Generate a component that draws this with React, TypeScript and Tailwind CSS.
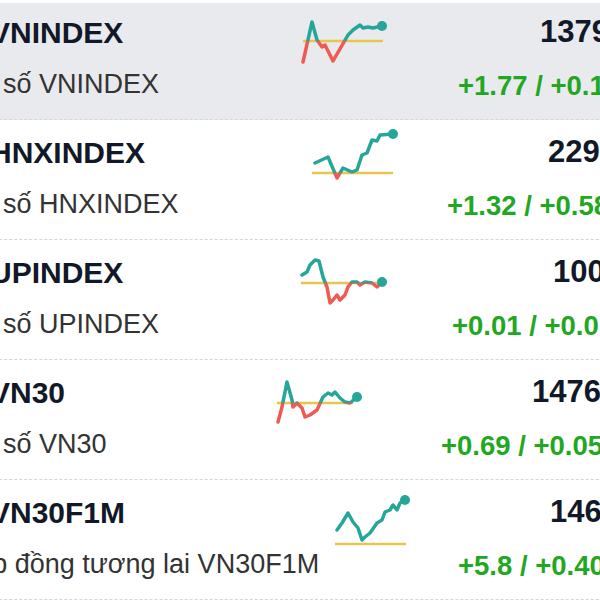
type Pt = [number, number];

interface Row {
    code: string;
    name: string;
    price: string;
    change: string;
    leftW: string;
    pricePad: string;
    changePad: string;
    base: number;
    baseX: [number, number];
    points: Pt[];
    active?: boolean;
}

const ROWS: Row[] = [
    {
        code: 'VNINDEX',
        name: 'Chỉ số VNINDEX',
        price: '1379.61',
        change: '+1.77 / +0.13%',
        leftW: 'w-[341px]',
        pricePad: 'pl-[123px]',
        changePad: 'pl-[41px]',
        base: 41,
        baseX: [6, 86],
        points: [[6, 62], [15, 22], [20, 40], [25, 47], [28, 45], [36, 61], [51, 35], [56, 30], [63, 25], [66, 28], [71, 27], [76, 28], [85, 26]],
        active: true,
    },
    {
        code: 'HNXINDEX',
        name: 'Chỉ số HNXINDEX',
        price: '229.84',
        change: '+1.32 / +0.58%',
        leftW: 'w-[351px]',
        pricePad: 'pl-[121px]',
        changePad: 'pl-[20px]',
        base: 53,
        baseX: [5, 86],
        points: [[8, 43], [21, 37], [30, 58], [36, 48], [45, 52], [50, 50], [55, 35], [60, 33], [65, 20], [70, 21], [73, 15], [86, 14]],
    },
    {
        code: 'UPINDEX',
        name: 'Chỉ số UPINDEX',
        price: '100.12',
        change: '+0.01 / +0.01%',
        leftW: 'w-[340px]',
        pricePad: 'pl-[137px]',
        changePad: 'pl-[36px]',
        base: 43,
        baseX: [5, 89],
        points: [[6, 35], [11, 32], [14, 25], [19, 20], [23, 21], [27, 37], [31, 47], [34, 63], [37, 60], [41, 55], [44, 60], [49, 55], [52, 47], [56, 42], [61, 42], [64, 45], [69, 42], [76, 43], [81, 47], [86, 42]],
    },
    {
        code: 'VN30',
        name: 'Chỉ số VN30',
        price: '1476.95',
        change: '+0.69 / +0.05%',
        leftW: 'w-[316px]',
        pricePad: 'pl-[140px]',
        changePad: 'pl-[49px]',
        base: 43,
        baseX: [5, 81],
        points: [[6, 62], [10, 47], [15, 22], [20, 40], [21, 47], [25, 43], [30, 48], [33, 57], [38, 55], [45, 50], [51, 37], [56, 33], [60, 35], [63, 32], [68, 38], [73, 42], [78, 43], [85, 37]],
    },
    {
        code: 'VN30F1M',
        name: 'Hợp đồng tương lai VN30F1M',
        price: '1466.8',
        change: '+5.8 / +0.40%',
        leftW: 'w-[374px]',
        pricePad: 'pl-[100px]',
        changePad: 'pl-[8px]',
        base: 64,
        baseX: [5, 76],
        points: [[7, 50], [12, 43], [18, 33], [23, 42], [28, 48], [32, 60], [35, 57], [40, 53], [47, 43], [52, 40], [55, 32], [60, 30], [63, 25], [67, 30], [70, 23], [75, 20]],
    },
];

function Spark({ row, id }: { row: Row; id: number }) {
    const pts = row.points.map((p) => p.join(',')).join(' ');
    const last = row.points[row.points.length - 1];
    return (
        <svg width="120" height="120" viewBox="0 0 120 120" className="shrink-0">
            <defs>
                <clipPath id={`up-${id}`}>
                    <rect x="0" y="0" width="120" height={row.base} />
                </clipPath>
                <clipPath id={`dn-${id}`}>
                    <rect x="0" y={row.base} width="120" height={120 - row.base} />
                </clipPath>
            </defs>
            <line x1={row.baseX[0]} y1={row.base} x2={row.baseX[1]} y2={row.base} stroke="#e8c64c" strokeWidth="2.5" />
            <polyline points={pts} fill="none" stroke="#ef5a52" strokeWidth="3.5" strokeLinejoin="round" strokeLinecap="round" clipPath={`url(#dn-${id})`} />
            <polyline points={pts} fill="none" stroke="#26a69a" strokeWidth="3.5" strokeLinejoin="round" strokeLinecap="round" clipPath={`url(#up-${id})`} />
            <circle cx={last[0]} cy={last[1]} r="5" fill="#26a69a" />
        </svg>
    );
}

export default function App() {
    return (
        <div className="w-[600px] h-[600px] overflow-hidden bg-white font-['Liberation_Sans',Arial,sans-serif]">
            <div className="-ml-[46px] w-[720px]">
                {ROWS.map((row, i) => (
                    <div
                        key={row.code}
                        className={`flex h-[120px] border-b border-dashed border-[#d6d6d6] ${
                            row.active ? 'bg-[#e9eaed] shadow-[inset_0_3px_0_#fff]' : 'bg-white'
                        }`}
                    >
                        {/* Name */}
                        <div className={`${row.leftW} ml-[2px] shrink-0 whitespace-nowrap pt-[15px]`}>
                            <div className="pl-[34px] text-[30px] leading-[36px] font-bold text-[#111827]">{row.code}</div>
                            <div className="-ml-[1px] mt-[17px] text-[27px] leading-[32px] text-[#333333]">{row.name}</div>
                        </div>

                        <Spark row={row} id={i} />

                        {/* Price */}
                        <div className="flex-1 whitespace-nowrap pt-[14px]">
                            <div className={`${row.pricePad} text-[31px] leading-[36px] font-bold text-[#111827]`}>{row.price}</div>
                            <div className={`${row.changePad} mt-[20px] text-[27.5px] leading-[32px] font-bold text-[#22a722]`}>
                                {row.change}
                            </div>
                        </div>
                    </div>
                ))}
            </div>
        </div>
    );
}
